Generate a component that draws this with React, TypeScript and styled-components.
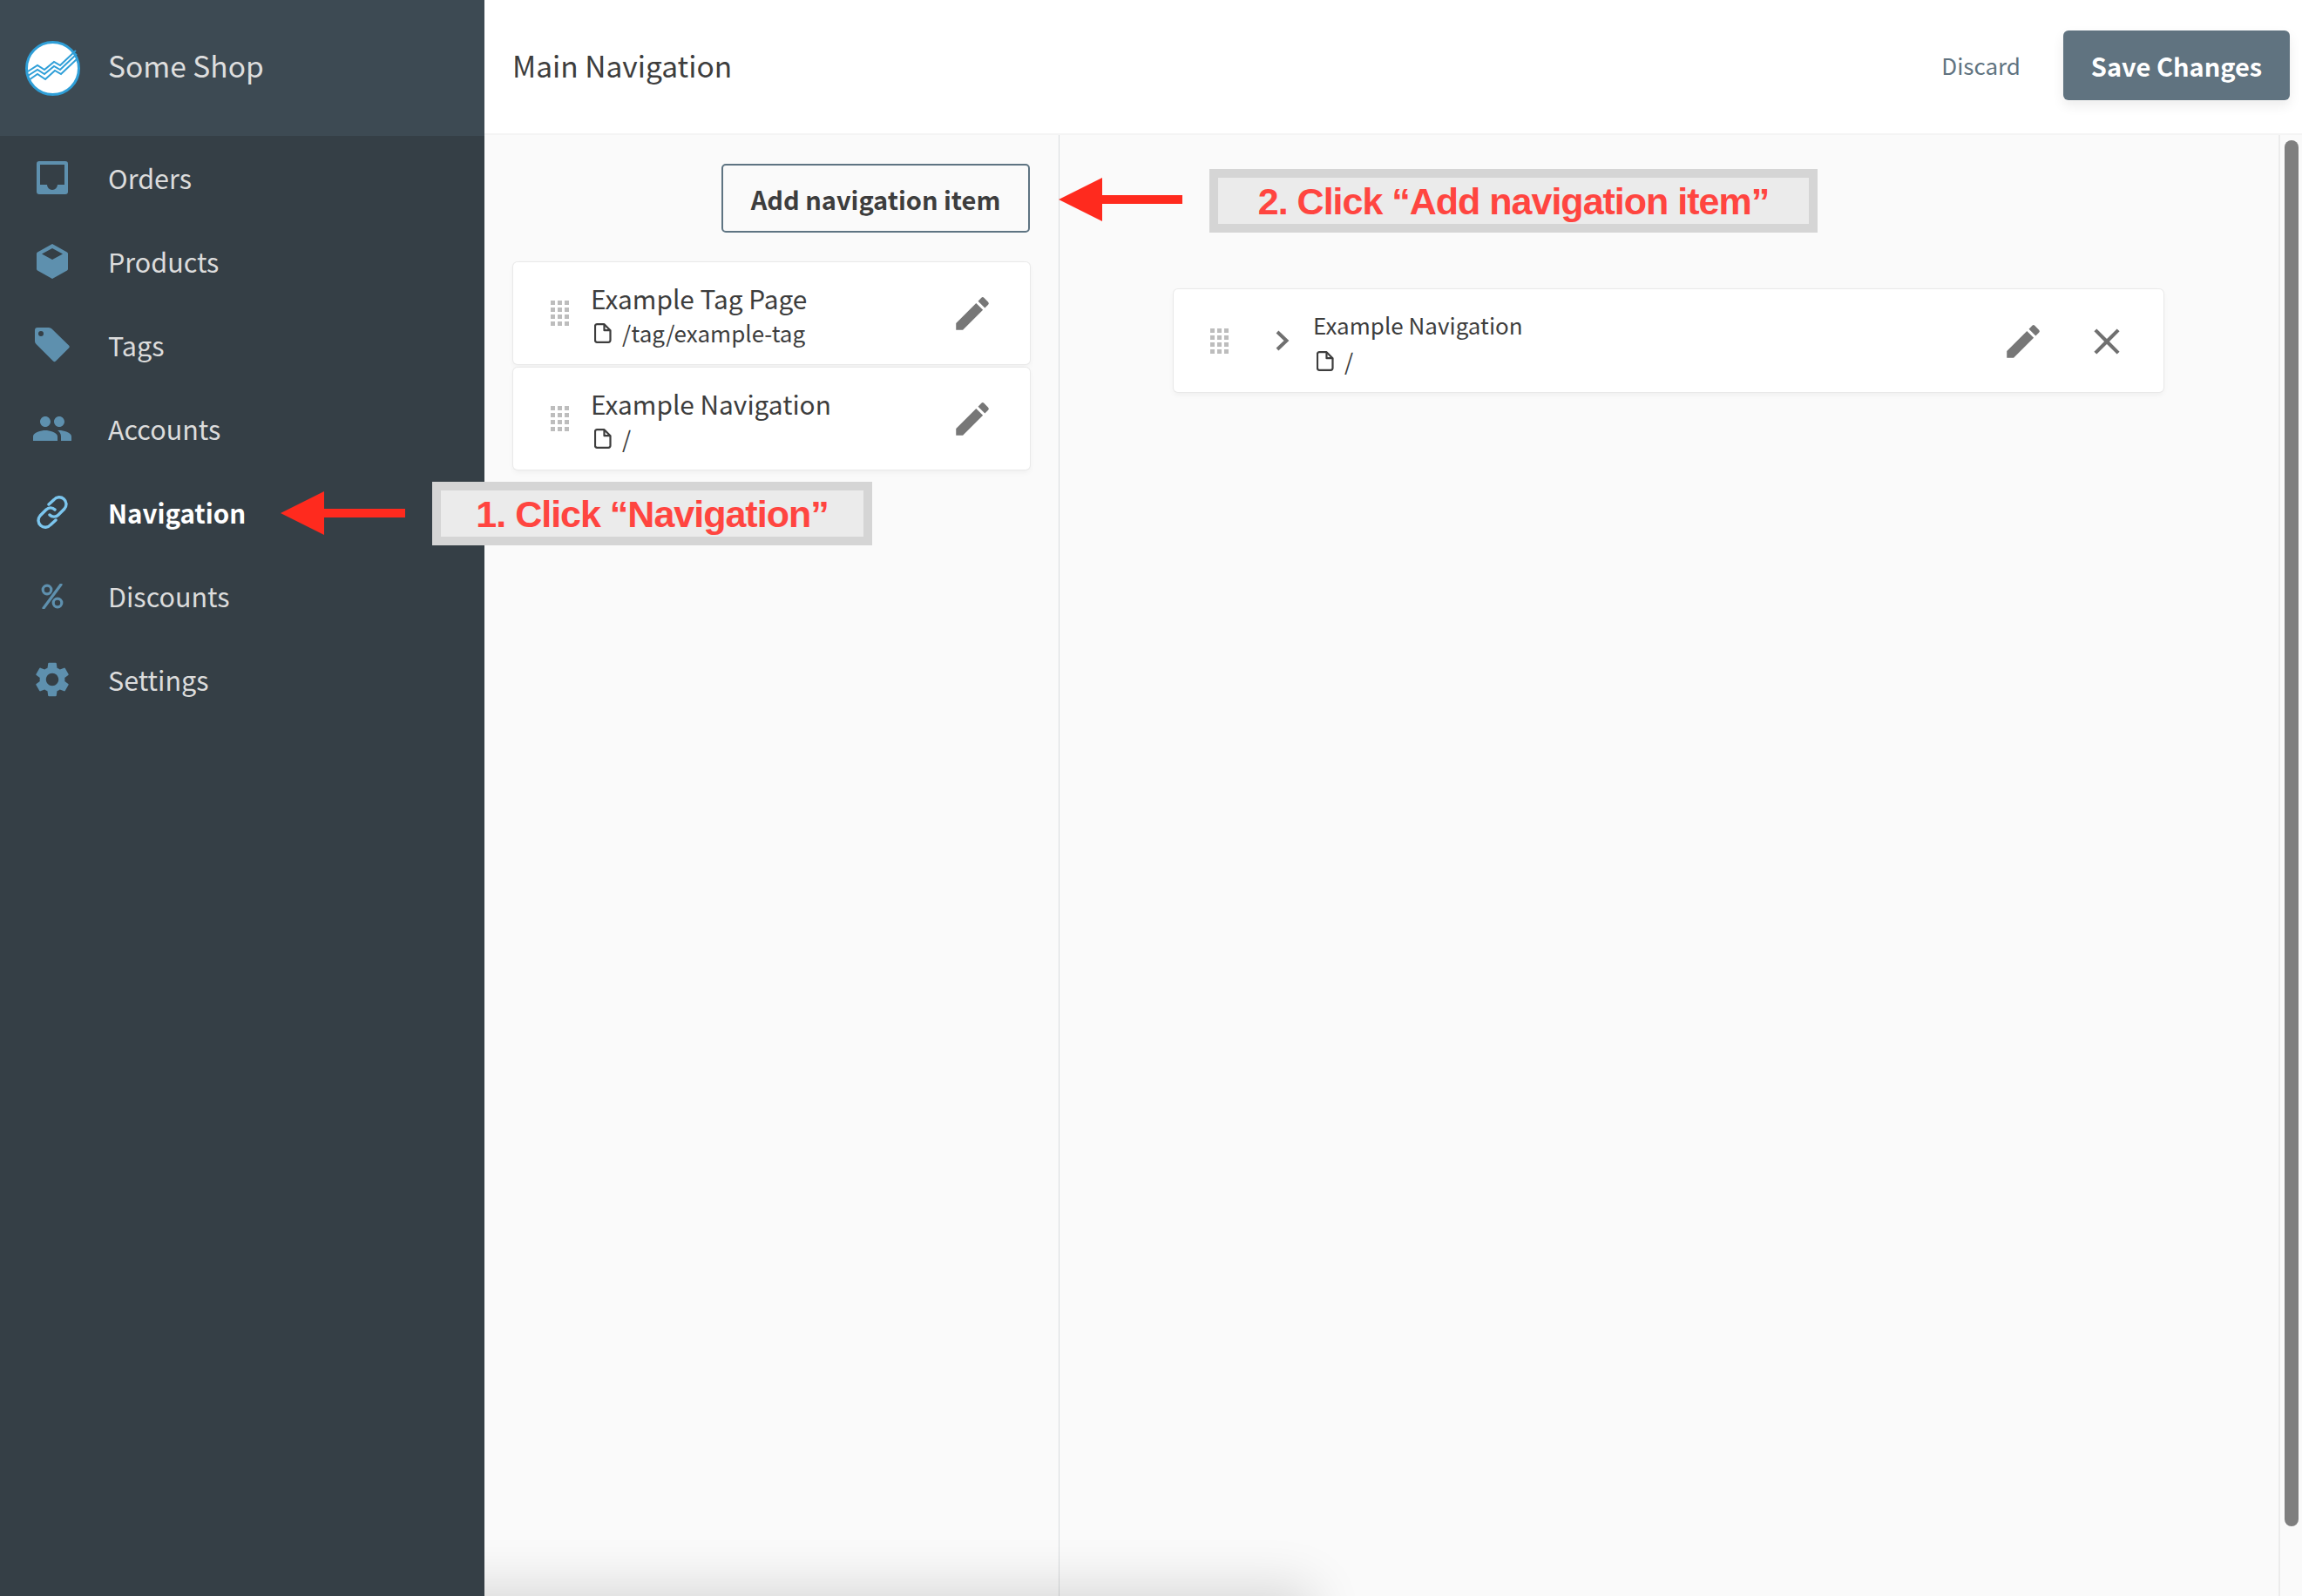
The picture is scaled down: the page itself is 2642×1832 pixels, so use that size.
import React from 'react';
import styled, { createGlobalStyle } from 'styled-components';
import { MdEdit, MdPeople, MdSettings, MdClose } from 'react-icons/md';

const GlobalStyle = createGlobalStyle`
  html, body {
    margin: 0;
    padding: 0;
    background: #fafafa;
  }
  body {
    font-family: "Noto Sans CJK SC", "Noto Sans", sans-serif;
    color: #3d3d3d;
  }
`;

const Page = styled.div`
  position: relative;
  display: flex;
  width: 2642px;
  height: 1832px;
  overflow: hidden;
`;

const Sidebar = styled.aside`
  flex: 0 0 556px;
  background: #353f46;
  display: flex;
  flex-direction: column;
`;

const Brand = styled.div`
  height: 156px;
  background: #3d4a53;
  display: flex;
  align-items: center;
  padding-left: 29px;
  gap: 32px;
`;

const BrandName = styled.span`
  font-size: 33.5px;
  line-height: 44px;
  margin-top: -6px;
  color: #dedede;
`;

const NavItem = styled.div<{ $active?: boolean }>`
  height: 96px;
  display: flex;
  align-items: center;
  color: ${(p) => (p.$active ? '#7cc6ee' : '#5e90ae')};
`;

const NavIcon = styled.span`
  flex: 0 0 120px;
  margin-right: 4px;
  display: flex;
  justify-content: center;
  svg {
    display: block;
  }
`;

const NavLabel = styled.span<{ $active?: boolean }>`
  font-size: ${(p) => (p.$active ? '29.5px' : '30.5px')};
  line-height: 40px;
  font-weight: ${(p) => (p.$active ? 700 : 400)};
  color: ${(p) => (p.$active ? '#ffffff' : '#dcdcdc')};
`;

const Main = styled.main`
  position: relative;
  flex: 1;
  display: flex;
  flex-direction: column;
  overflow: hidden;
`;

const Header = styled.header`
  flex: 0 0 155px;
  box-sizing: border-box;
  background: #ffffff;
  border-bottom: 2px solid #f4f4f4;
  display: flex;
  align-items: center;
  padding: 0 14px 3px 32px;
`;

const Title = styled.h1`
  flex: 1;
  margin: 0;
  font-size: 33.5px;
  line-height: 44px;
  font-weight: 400;
  color: #3d3d3d;
`;

const Discard = styled.span`
  font-size: 26px;
  line-height: 36px;
  color: #607380;
  margin-right: 49px;
`;

const SaveButton = styled.button`
  width: 260px;
  height: 80px;
  border: 0;
  border-radius: 6px;
  background: #607380;
  color: #ffffff;
  font-family: inherit;
  font-size: 29px;
  font-weight: 700;
  box-shadow: 0 6px 14px rgba(0, 0, 0, 0.08);
`;

const Panels = styled.div`
  flex: 1;
  display: flex;
  min-height: 0;
  background: #fafafa;
`;

const LeftPanel = styled.section`
  flex: 0 0 660px;
  box-sizing: border-box;
  border-right: 1px solid #d9dcde;
  padding: 33px 33px 0 33px;
  display: flex;
  flex-direction: column;
`;

const AddButton = styled.button`
  align-self: flex-end;
  width: 354px;
  height: 79px;
  box-sizing: border-box;
  border: 2px solid #5e7482;
  border-radius: 5px;
  background: transparent;
  color: #3d3d3d;
  font-family: inherit;
  font-size: 29px;
  font-weight: 700;
  margin-bottom: 34px;
`;

const ItemCard = styled.div`
  height: 117px;
  box-sizing: border-box;
  background: #ffffff;
  border-radius: 5px;
  box-shadow: 0 0 0 1px #e9e9e9, 0 3px 6px rgba(0, 0, 0, 0.05);
  display: flex;
  align-items: center;
  padding-left: 43px;
  margin-bottom: 4px;
`;

const Handle = styled.div`
  display: grid;
  grid-template-columns: repeat(3, 5px);
  grid-auto-rows: 5px;
  gap: 3px;
  flex: 0 0 auto;
  i {
    background: #bdbdbd;
  }
`;

const ItemText = styled.div`
  flex: 1;
  margin-left: 25px;
  padding-top: 4px;
  display: flex;
  flex-direction: column;
`;

const ItemTitle = styled.div`
  font-size: 29.8px;
  line-height: 40px;
  margin-bottom: 1px;
  color: #3d3d3d;
`;

const ItemPath = styled.div`
  display: flex;
  align-items: center;
  gap: 12px;
  padding-left: 4px;
  font-size: 26px;
  line-height: 38px;
  color: #3d3d3d;
`;

const EditButton = styled.span`
  display: flex;
  margin-right: 41px;
  color: #777777;
`;

const RightPanel = styled.section`
  flex: 1;
  padding: 177px 132px 0 131px;
`;

const TreeCard = styled(ItemCard)`
  height: 118px;
  padding-left: 42px;
`;

const Chevron = styled.span`
  display: flex;
  margin-left: 53px;
  color: #707070;
`;

const TreeText = styled.div`
  flex: 1;
  margin-left: 27px;
  padding-top: 6px;
  display: flex;
  flex-direction: column;
  gap: 4px;
`;

const TreeTitle = styled.div`
  font-size: 26px;
  line-height: 36px;
  color: #3d3d3d;
`;

const TreeEdit = styled.span`
  display: flex;
  color: #777777;
  margin-right: 46px;
  margin-top: 1px;
`;

const TreeClose = styled.span`
  display: flex;
  color: #707070;
  margin-right: 40px;
  margin-top: 1px;
`;

const ScrollTrack = styled.div`
  flex: 0 0 27px;
  box-sizing: border-box;
  border-left: 2px solid #ececec;
  padding: 6px 4px 80px 5px;
  display: flex;
`;

const ScrollThumb = styled.div`
  flex: 1;
  background: #7f7f7f;
  border-radius: 8px;
`;

const BottomShade = styled.div`
  position: absolute;
  left: -100px;
  top: 1832px;
  width: 1040px;
  height: 60px;
  box-shadow: 0 0 60px 10px rgba(0, 0, 0, 0.14);
`;

const Callout = styled.div<{ $left: number; $top: number; $width: number }>`
  position: absolute;
  left: ${(p) => p.$left}px;
  top: ${(p) => p.$top}px;
  width: ${(p) => p.$width}px;
  height: 73px;
  box-sizing: border-box;
  border: 10px solid #d5d5d5;
  background: #ebebeb;
  color: #ff4540;
  font-family: "Liberation Sans", Arial, sans-serif;
  font-size: 43px;
  font-weight: 700;
  line-height: 55px;
  letter-spacing: -1px;
  text-align: center;
  white-space: nowrap;
`;

const ArrowMark = styled.svg<{ $left: number; $top: number }>`
  position: absolute;
  left: ${(p) => p.$left}px;
  top: ${(p) => p.$top}px;
`;

const Arrow = ({ left, top, width }: { left: number; top: number; width: number }) => (
  <ArrowMark $left={left} $top={top} width={width} height={50} viewBox={`0 0 ${width} 50`}>
    <path d={`M0 25 L50 0 V20 H${width} V30 H50 V50 Z`} fill="#ff2a1e" />
  </ArrowMark>
);

const Logo = () => (
  <svg width="63" height="63" viewBox="0 0 63 63">
    <circle cx="31.5" cy="31.5" r="30" fill="#fff" stroke="#2f9fd8" strokeWidth="3" />
    <g fill="none" stroke="#2f9fd8" strokeWidth="2">
      <path d="M3 35 L14 28 L22 33 L33 24 L40 28 L58 11" />
      <path d="M3 40 L14 33 L22 38 L33 29 L40 33 L59 15" />
      <path d="M4 45 L14 38 L23 44 L34 34 L41 38 L60 20" />
    </g>
  </svg>
);

const InboxIcon = () => (
  <svg width="36" height="38" viewBox="0 0 36 38">
    <path
      fillRule="evenodd"
      fill="currentColor"
      d="M3 0h30a3 3 0 0 1 3 3v32a3 3 0 0 1-3 3H3a3 3 0 0 1-3-3V3a3 3 0 0 1 3-3zM4 4v23h8a6 6 0 0 0 12 0h8V4z"
    />
  </svg>
);

const BoxIcon = () => (
  <svg width="36" height="40" viewBox="0 0 36 40">
    <path
      fillRule="evenodd"
      fill="currentColor"
      d="M18 0l17 9.5q1 .6 1 1.7v17.6q0 1.1-1 1.7L18 40 1 30.5q-1-.6-1-1.7V11.2q0-1.1 1-1.7zM6 11.5l12 6.5 12-6.5-12-6.5z"
    />
  </svg>
);

const TagIcon = () => (
  <svg width="40" height="40" viewBox="0 0 40 40">
    <path
      fillRule="evenodd"
      fill="currentColor"
      d="M3 0h13q2 0 3.5 1.5l19.5 19q1.5 1.5 0 3L24 38.5q-1.5 1.5-3 0L1.5 19Q0 17.5 0 15.5V3q0-3 3-3zM7 4a3 3 0 1 0 0 6 3 3 0 0 0 0-6z"
    />
  </svg>
);

const LinkIcon = () => (
  <svg width="38" height="38" viewBox="0 0 38 38" fill="none" stroke="currentColor" strokeWidth="3.4" strokeLinecap="round">
    <path d="M15 10 L21 4.5 A7.5 7.5 0 0 1 33 15 L26 22 A7 7 0 0 1 16 22" />
    <path d="M23 28 L17 33.5 A7.5 7.5 0 0 1 5 23 L12 16 A7 7 0 0 1 22 16" />
  </svg>
);

const PercentIcon = () => (
  <svg width="26" height="29" viewBox="0 0 26 29" fill="none" stroke="currentColor" strokeWidth="3.2">
    <circle cx="7" cy="7" r="4.8" />
    <circle cx="19" cy="22" r="4.8" />
    <path d="M23 1 L3 28" strokeLinecap="round" />
  </svg>
);

const FileIcon = () => (
  <svg width="20" height="23" viewBox="0 0 20 23" fill="none" stroke="currentColor" strokeWidth="2.2" strokeLinejoin="round">
    <path d="M3 1.2h8.5l7 7V19.5a2.2 2.2 0 0 1-2.2 2.3H3.2A2.2 2.2 0 0 1 1 19.5V3.4a2.2 2.2 0 0 1 2-2.2z" />
    <path d="M11.5 1.2V8.2h7" />
  </svg>
);

const ChevronIcon = () => (
  <svg width="17" height="24" viewBox="0 0 17 24" fill="none" stroke="currentColor" strokeWidth="4">
    <path d="M3 2 L13.5 12 L3 22" />
  </svg>
);

const DragHandle = () => (
  <Handle>
    {Array.from({ length: 12 }).map((_, i) => (
      <i key={i} />
    ))}
  </Handle>
);

const navItems = [
  { label: 'Orders', icon: <InboxIcon /> },
  { label: 'Products', icon: <BoxIcon /> },
  { label: 'Tags', icon: <TagIcon /> },
  { label: 'Accounts', icon: <MdPeople size={48} /> },
  { label: 'Navigation', icon: <LinkIcon />, active: true },
  { label: 'Discounts', icon: <PercentIcon /> },
  { label: 'Settings', icon: <MdSettings size={48} /> },
];

const items = [
  { title: 'Example Tag Page', path: '/tag/example-tag' },
  { title: 'Example Navigation', path: '/' },
];

const App = () => {
  return (
    <Page>
      <GlobalStyle />
      <Sidebar>
        <Brand>
          <Logo />
          <BrandName>Some Shop</BrandName>
        </Brand>
        {navItems.map((item) => (
          <NavItem key={item.label} $active={item.active}>
            <NavIcon>{item.icon}</NavIcon>
            <NavLabel $active={item.active}>{item.label}</NavLabel>
          </NavItem>
        ))}
      </Sidebar>
      <Main>
        <Header>
          <Title>Main Navigation</Title>
          <Discard>Discard</Discard>
          <SaveButton>Save Changes</SaveButton>
        </Header>
        <Panels>
          <LeftPanel>
            <AddButton>Add navigation item</AddButton>
            {items.map((item) => (
              <ItemCard key={item.title}>
                <DragHandle />
                <ItemText>
                  <ItemTitle>{item.title}</ItemTitle>
                  <ItemPath>
                    <FileIcon />
                    {item.path}
                  </ItemPath>
                </ItemText>
                <EditButton>
                  <MdEdit size={50} />
                </EditButton>
              </ItemCard>
            ))}
          </LeftPanel>
          <RightPanel>
            <TreeCard>
              <DragHandle />
              <Chevron>
                <ChevronIcon />
              </Chevron>
              <TreeText>
                <TreeTitle>Example Navigation</TreeTitle>
                <ItemPath>
                  <FileIcon />/
                </ItemPath>
              </TreeText>
              <TreeEdit>
                <MdEdit size={50} />
              </TreeEdit>
              <TreeClose>
                <MdClose size={50} />
              </TreeClose>
            </TreeCard>
          </RightPanel>
          <ScrollTrack>
            <ScrollThumb />
          </ScrollTrack>
        </Panels>
        <BottomShade />
      </Main>
      <Arrow left={322} top={564} width={143} />
      <Callout $left={496} $top={553} $width={505}>1. Click “Navigation”</Callout>
      <Arrow left={1215} top={204} width={142} />
      <Callout $left={1388} $top={194} $width={698}>2. Click “Add navigation item”</Callout>
    </Page>
  );
};

export default App;
